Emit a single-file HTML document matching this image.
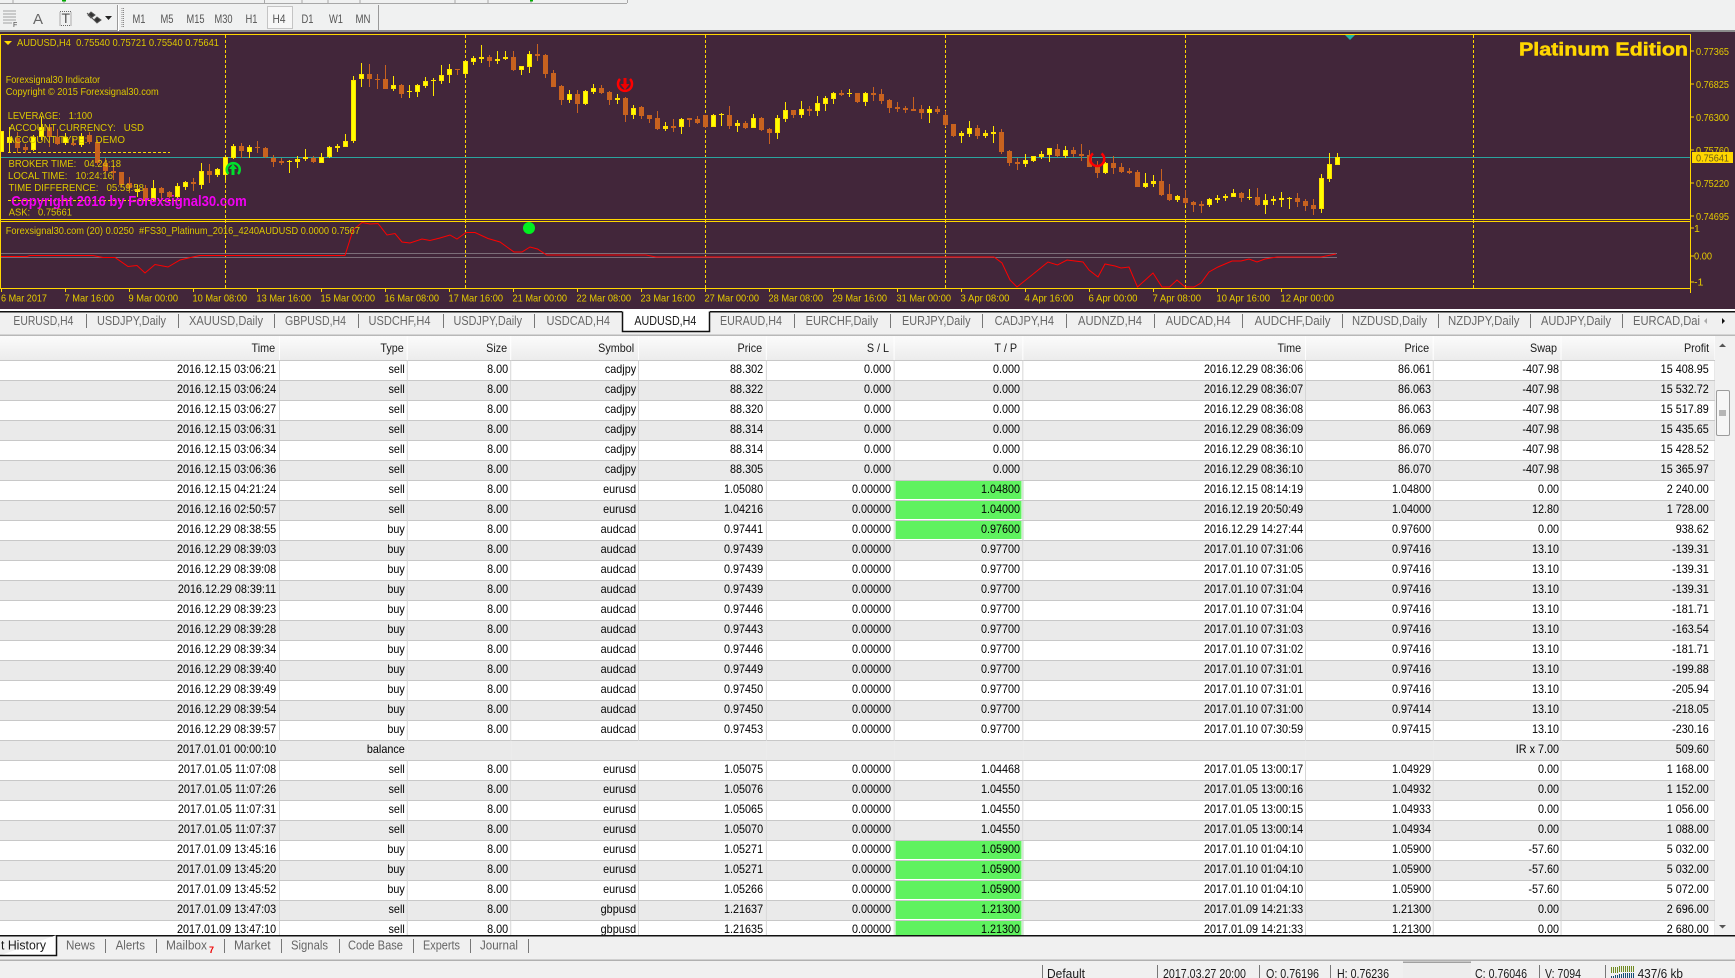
<!DOCTYPE html>
<html lang="en"><head><meta charset="utf-8"><title>MT4 Account History</title>
<style>
html,body{margin:0;padding:0;background:#f0f0f0}
#root{position:relative;width:1735px;height:978px;overflow:hidden;background:#f0f0f0;font-family:"Liberation Sans",sans-serif}
svg{position:absolute;left:0;top:0}
svg text{font-family:"Liberation Sans",sans-serif;white-space:pre}
.c{font-size:10.5px;fill:#dcc800}
.t{font-size:10.5px;fill:#e6cc00}
.s{font-size:12.5px;fill:#666}
.st{font-size:12.5px;fill:#1a1a1a}
.m{font-size:12px;fill:#555}
#tw{position:absolute;left:0;top:336px;width:1715px;height:599px;overflow:hidden;background:#fff}
table{border-collapse:separate;border-spacing:0;table-layout:fixed;width:1905.6px;transform:scaleX(.9);transform-origin:0 0;font:12px/17px "Liberation Sans",sans-serif;color:#000}
th{height:24px;padding:0 4.4px 0 0;box-sizing:border-box;text-align:right;font-weight:normal;color:#1a1a1a;background:linear-gradient(#fbfbfb,#ececec);border-right:1px solid #fff;overflow:hidden}
th:nth-child(2),th:nth-child(3){padding-right:3.3px}
th:nth-child(6),th:nth-child(7),th:last-child{padding-right:5.5px}
td{height:20px;padding:0 2.2px 0 0;box-sizing:border-box;text-align:right;vertical-align:top;white-space:nowrap;border-top:1px solid #c8c8c8;border-right:1px solid #d2d2d2;overflow:hidden}
td:first-child,td:nth-child(5),td:nth-child(6){padding-right:3.3px}
tr.a td{background:#eaeaea}
td.g,tr.a td.g{background:#5ff25f;box-shadow:inset 1px 0 0 #fff,inset -1px 0 0 #fff,inset 0 -1px 0 #fff}
td:last-child{padding-right:6px}
td.n{border-right-color:transparent}
</style></head><body><div id="root">
<svg width="1735" height="978" viewBox="0 0 1735 978">
<!-- toolbar -->
<rect width="1735" height="31" fill="#f0f1f1"/>
<path d="M0 3.5H627M627.5 0V3M13 0V3M64 0V3M264.5 0V3M302 0V3M328 0V3M360 0V3M455 0V3M488 0V3M531 0V3" stroke="#a8a8a8" fill="none"/>
<rect x="62" y="0" width="4" height="1.5" fill="#0a0"/><rect x="530" y="0" width="3" height="1.5" fill="#0a0"/>
<rect y="30" width="1735" height="2" fill="#8c8c8c"/>
<path d="M3.5 11H16M3.5 14H16M3.5 17H16M3.5 20H16M3.5 23H12" stroke="#555" stroke-dasharray="1 1" fill="none"/>
<text x="13" y="27" font-size="7" fill="#444">F</text>
<text x="33" y="24" font-size="15" fill="#666">A</text>
<path d="M60 11.5H71V25.5H60Z" fill="none" stroke="#666" stroke-dasharray="1 1"/>
<text x="61.5" y="23" font-size="14" fill="#555">T</text>
<path d="M91 12l4 3-4 3-3-3zM97 17l4 3-4 3-3-3zM87 13l8 8" fill="#333" stroke="#555"/>
<path d="M105 16h7l-3.5 4z" fill="#222"/>
<rect x="117" y="5" width="1" height="26" fill="#999"/><rect x="118" y="5" width="1" height="26" fill="#fff"/>
<path d="M122 8V27M123.500 8V27" stroke="#888" stroke-dasharray="1 1" fill="none"/>
<rect x="267.500" y="6.500" width="25" height="22" fill="#f7f7f7" stroke="#c4c4c4"/>
<rect x="378" y="5" width="1" height="26" fill="#999"/>
<g>
<text class="m" x="132.500" y="23" textLength="13" lengthAdjust="spacingAndGlyphs">M1</text><text class="m" x="160.500" y="23" textLength="13" lengthAdjust="spacingAndGlyphs">M5</text><text class="m" x="186.500" y="23" textLength="18" lengthAdjust="spacingAndGlyphs">M15</text><text class="m" x="214.500" y="23" textLength="18" lengthAdjust="spacingAndGlyphs">M30</text><text class="m" x="245.500" y="23" textLength="12" lengthAdjust="spacingAndGlyphs">H1</text><text class="m" x="272.500" y="23" textLength="13" lengthAdjust="spacingAndGlyphs">H4</text><text class="m" x="301.500" y="23" textLength="12" lengthAdjust="spacingAndGlyphs">D1</text><text class="m" x="329" y="23" textLength="14" lengthAdjust="spacingAndGlyphs">W1</text><text class="m" x="355.500" y="23" textLength="15" lengthAdjust="spacingAndGlyphs">MN</text>
</g>
<!-- chart -->
<rect y="32" width="1735" height="277" fill="#42263a"/>
<g fill="none" stroke="#ffd700" stroke-width="1" stroke-dasharray="3 2">
<path d="M225.500 35V288M465.500 35V288M705.500 35V288M945.500 35V288M1185.500 35V288M1473.500 35V288"/>
<path d="M8 152.500H170M8 200.500H180"/>
</g>
<path d="M0 157.500H1690" stroke="#2ba39e" fill="none"/>
<path d="M1 253.500H1337M1 257.500H1337" stroke="#7b6d78" fill="none"/>
<g shape-rendering="crispEdges" fill="none">
<path stroke="#ffe600" d="M1.500 131V152M9.500 127V152M33.500 135V151M41.500 117V140M65.500 133V145M81.500 133V147M137.500 185V197M153.500 180V202M177.500 183V198M185.500 181V190M201.500 163V189M217.500 168V177M225.500 155V180M233.500 144V159M249.500 145V158M289.500 160V173M297.500 156V168M305.500 149V161M321.500 153V163M329.500 146V158M337.500 144V152M345.500 134V147M353.500 76V143M361.500 63V87M393.500 76V91M409.500 85V98M417.500 84V97M425.500 77V88M433.500 78V96M441.500 65V84M449.500 64V83M465.500 60V78M473.500 56V65M481.500 45V63M497.500 51V64M505.500 51V60M521.500 66V75M529.500 51V73M569.500 90V103M585.500 90V105M593.500 84V94M617.500 94V104M633.500 105V119M665.500 122V131M681.500 118V134M713.500 114V127M721.500 113V126M737.500 120V132M753.500 114V128M777.500 115V139M785.500 102V122M801.500 101V118M817.500 96V116M825.500 96V111M833.500 92V104M849.500 89V97M865.500 92V106M929.500 106V123M961.500 131V143M969.500 121V137M985.500 130V138M993.500 126V143M1025.500 154V167M1033.500 156V162M1041.500 151V159M1049.500 148V162M1065.500 146V158M1105.500 162V174M1145.500 173V188M1153.500 175V187M1177.500 195V202M1209.500 198V207M1217.500 195V203M1225.500 194V201M1233.500 189V197M1249.500 189V200M1265.500 194V214M1273.500 196V205M1281.500 192V207M1289.500 197V209M1321.500 174V213M1329.500 153V182M1337.500 153V165"/>
<path stroke="#ffe000" stroke-width="5" d="M1.500 131V152M9.500 137V143M33.500 137V150M41.500 127V137M65.500 137V143M81.500 136V145M137.500 189V192M153.500 188V200M177.500 186V197M185.500 182V187M201.500 171V185M217.500 169V175M225.500 157V175M233.500 146V158M249.500 147V152M289.500 161V162M297.500 159V162M305.500 157V159M321.500 157V163M329.500 147V157M337.500 146V148M345.500 141V147M353.500 80V141M361.500 74V79M393.500 85V89M409.500 91V92M417.500 85V92M425.500 81V86M433.500 80V81M441.500 75V81M449.500 69V75M465.500 61V74M473.500 58V62M481.500 57V59M497.500 59V61M505.500 57V59M521.500 66V70M529.500 54V67M569.500 94V100M585.500 91V104M593.500 88V92M617.500 98V100M633.500 108V115M665.500 126V129M681.500 119V127M713.500 115V127M721.500 114V115M737.500 123V126M753.500 118V128M777.500 118V133M785.500 110V119M801.500 109V115M817.500 103V111M825.500 98V104M833.500 93V99M849.500 93V94M865.500 93V102M929.500 109V113M961.500 133V136M969.500 128V134M985.500 133V136M993.500 132V134M1025.500 160V164M1033.500 156V161M1041.500 154V157M1049.500 148V155M1065.500 150V156M1105.500 163V173M1145.500 183V187M1153.500 181V184M1177.500 196V200M1209.500 199V205M1217.500 198V200M1225.500 196V198M1233.500 193V197M1249.500 197V198M1265.500 200V205M1273.500 199V201M1281.500 198V200M1289.500 198V199M1321.500 178V209M1329.500 164V179M1337.500 157V165"/>
<path stroke="#ffff00" stroke-width="3" d="M1.500 132V151M9.500 138V142M33.500 138V149M41.500 128V136M65.500 138V142M81.500 137V144M153.500 189V199M177.500 187V196M185.500 183V186M201.500 172V184M217.500 170V174M225.500 158V174M233.500 147V157M249.500 148V151M321.500 158V162M329.500 148V156M345.500 142V146M353.500 81V140M361.500 75V78M393.500 86V88M417.500 86V91M425.500 82V85M441.500 76V80M449.500 70V74M465.500 62V73M473.500 59V61M521.500 67V69M529.500 55V66M569.500 95V99M585.500 92V103M593.500 89V91M633.500 109V114M681.500 120V126M713.500 116V126M753.500 119V127M777.500 119V132M785.500 111V118M801.500 110V114M817.500 104V110M825.500 99V103M833.500 94V98M865.500 94V101M929.500 110V112M969.500 129V133M1025.500 161V163M1033.500 157V160M1049.500 149V154M1065.500 151V155M1105.500 164V172M1145.500 184V186M1209.500 200V204M1233.500 194V196M1265.500 201V204M1321.500 179V208M1329.500 165V178M1337.500 158V164"/>
<path stroke="#c8621f" d="M17.500 132V153M25.500 144V153M49.500 125V147M57.500 129V145M73.500 138V146M89.500 132V144M97.500 140V165M105.500 158V173M113.500 165V180M121.500 172V187M129.500 177V193M145.500 185V202M161.500 187V200M169.500 191V198M193.500 178V191M209.500 164V183M241.500 143V158M257.500 141V153M265.500 147V158M273.500 155V167M281.500 158V165M313.500 156V163M369.500 64V87M377.500 74V89M385.500 65V89M401.500 84V98M457.500 69V75M489.500 55V67M513.500 51V71M537.500 44V61M545.500 54V78M553.500 70V87M561.500 85V105M577.500 90V113M601.500 85V94M609.500 91V105M625.500 97V122M641.500 106V119M649.500 115V123M657.500 111V130M673.500 119V132M689.500 118V127M697.500 116V124M705.500 115V128M729.500 106V129M745.500 121V129M761.500 117V131M769.500 128V144M793.500 110V118M809.500 106V116M841.500 90V96M857.500 93V103M873.500 87V101M881.500 89V104M889.500 99V113M897.500 102V112M905.500 106V113M913.500 97V111M921.500 105V119M937.500 106V114M945.500 111V127M953.500 124V137M977.500 125V139M1001.500 129V154M1009.500 150V166M1017.500 158V170M1057.500 144V157M1073.500 147V157M1081.500 144V161M1089.500 150V167M1097.500 161V178M1113.500 156V174M1121.500 163V173M1129.500 168V174M1137.500 170V187M1161.500 169V196M1169.500 184V201M1185.500 190V205M1193.500 201V212M1201.500 201V213M1241.500 192V202M1257.500 188V206M1297.500 193V207M1305.500 199V211M1313.500 199V215"/>
<path stroke="#c8621f" stroke-width="5" d="M17.500 138V148M25.500 147V150M49.500 127V137M57.500 137V144M73.500 143V145M89.500 135V142M97.500 142V163M105.500 163V171M113.500 171V173M121.500 172V185M129.500 183V188M145.500 188V200M161.500 188V193M169.500 192V197M193.500 182V184M209.500 171V175M241.500 146V151M257.500 147V148M265.500 148V157M273.500 158V162M281.500 161V163M313.500 158V162M369.500 74V79M377.500 79V80M385.500 79V89M401.500 85V94M457.500 69V70M489.500 57V61M513.500 57V70M537.500 54V56M545.500 55V74M553.500 73V87M561.500 86V100M577.500 94V104M601.500 88V93M609.500 92V100M625.500 98V115M641.500 107V116M649.500 115V119M657.500 118V129M673.500 126V128M689.500 118V120M697.500 119V123M705.500 115V127M729.500 115V126M745.500 123V128M761.500 118V130M769.500 129V133M793.500 110V115M809.500 109V111M841.500 93V95M857.500 93V102M873.500 93V95M881.500 94V101M889.500 100V108M897.500 107V109M905.500 108V110M913.500 109V111M921.500 109V113M937.500 109V112M945.500 115V125M953.500 124V136M977.500 128V136M1001.500 132V152M1009.500 151V163M1017.500 162V164M1057.500 149V156M1073.500 150V154M1081.500 154V156M1089.500 155V167M1097.500 166V173M1113.500 163V168M1121.500 167V172M1129.500 171V173M1137.500 172V187M1161.500 181V195M1169.500 194V200M1185.500 198V203M1193.500 202V205M1201.500 204V206M1241.500 193V198M1257.500 197V205M1297.500 198V202M1305.500 201V206M1313.500 205V209"/>
</g>
<!-- signal arrows -->
<path d="M228.500 174A6.500 6.500 0 1 1 238 174" fill="none" stroke="#00e02c" stroke-width="2.500"/>
<path d="M233 164l4 5h-2.500v6h-3v-6h-2.500z" fill="#00e02c"/>
<path d="M620 79A7 7 0 1 0 630 79" fill="none" stroke="#f00" stroke-width="2.500"/>
<path d="M623.500 78h3v6h3l-4.500 6-4.500-6h3z" fill="#e00"/>
<path d="M1093 153.500A7 7 0 1 0 1101.500 153.500" fill="none" stroke="#f00" stroke-width="2.500"/>
<circle cx="529" cy="228" r="6" fill="#00f020"/>
<path d="M1345 35h10l-5 5z" fill="#20b0a0"/>
<!-- indicator line -->
<path fill="none" stroke="#f00" d="M1 256.500H27L30 255.500H93L103 257.500H115L128 266.500L137 265.500L145 273L155 264.500L168 267L180 260L195 256.500L200 255.500H345L353 230L362 222.500L370 224L378 223.500L387 235L395 233.500L402 242L410 243L422 239L430 240.500L440 238L450 235L457 239L466 232.500L475 232.500L488 238.500L500 242L514 252L522 252L530 247L537.500 249L546.700 255H646L656 257H705L994 257L1002 263L1010 280L1017 287L1032 275L1048 262L1057.500 265L1067 260L1083 262L1089 270L1098 277L1105 264L1115 266L1121 268L1129 267L1137.500 287L1153 273L1162 287H1169.500L1177 280L1185 287H1194L1201 283L1209 272L1218 267L1232 261L1241 261L1249 259L1257 262L1265 259L1277 257H1321L1336 254"/>
<!-- frames -->
<path fill="none" stroke="#ffd700" d="M0.500 34.500H1690.500V288.500H0.500ZM0 219.500H1690.500M0 221.500H1690.500M1690.500 34V293"/>
<path stroke="#ffd700" fill="none" d="M1691 51H1694M1691 84H1694M1691 117H1694M1691 150H1694M1691 183H1694M1691 216H1694M1691 228H1694M1691 256H1694M1691 282H1694M1.500 289V292M65.500 289V292M129.500 289V292M193.500 289V292M257.500 289V292M321.500 289V292M385.500 289V292M449.500 289V292M513.500 289V292M577.500 289V292M641.500 289V292M705.500 289V292M769.500 289V292M833.500 289V292M897.500 289V292M961.500 289V292M1025.500 289V292M1089.500 289V292M1153.500 289V292M1217.500 289V292M1281.500 289V292"/>
<path d="M4 41h8l-4 4z" fill="#ffd700"/>
<!-- chart text -->
<text class="c" x="17" y="46" textLength="202" lengthAdjust="spacingAndGlyphs">AUDUSD,H4  0.75540 0.75721 0.75540 0.75641</text>
<text class="c" x="5.700" y="83" textLength="94.500" lengthAdjust="spacingAndGlyphs">Forexsignal30 Indicator</text>
<text class="c" x="5.700" y="95" textLength="153" lengthAdjust="spacingAndGlyphs">Copyright © 2015 Forexsignal30.com</text>
<text class="c" x="7.700" y="119" textLength="84.500" lengthAdjust="spacingAndGlyphs">LEVERAGE:   1:100</text>
<text class="c" x="9" y="131" textLength="135" lengthAdjust="spacingAndGlyphs">ACCOUNT CURRENCY:   USD</text>
<text class="c" x="8" y="143" textLength="117" lengthAdjust="spacingAndGlyphs">ACCOUNT TYPE:   DEMO</text>
<text class="c" x="8.500" y="167" textLength="112.500" lengthAdjust="spacingAndGlyphs">BROKER TIME:   04:24:18</text>
<text class="c" x="8" y="179" textLength="105" lengthAdjust="spacingAndGlyphs">LOCAL TIME:   10:24:16</text>
<text class="c" x="8.500" y="191" textLength="135.500" lengthAdjust="spacingAndGlyphs">TIME DIFFERENCE:   05:59:58</text>
<text class="c" x="8.700" y="215.500" textLength="63.300" lengthAdjust="spacingAndGlyphs">ASK:   0.75661</text>
<text x="11.300" y="206" font-size="15" font-weight="bold" fill="#f000f0" textLength="235.400" lengthAdjust="spacingAndGlyphs">Copyright 2016 by Forexsignal30.com</text>
<text class="c" x="5.700" y="234" textLength="354.300" lengthAdjust="spacingAndGlyphs">Forexsignal30.com (20) 0.0250  #FS30_Platinum_2016_4240AUDUSD 0.0000 0.7567</text>
<text x="1519" y="55.500" font-size="18.500" font-weight="bold" fill="#ffd700" stroke="#ffd700" stroke-width=".5" textLength="169" lengthAdjust="spacingAndGlyphs">Platinum Edition</text>
<!-- price axis -->
<g>
<text class="t" x="1696" y="55" textLength="33" lengthAdjust="spacingAndGlyphs">0.77365</text>
<text class="t" x="1696" y="88" textLength="33" lengthAdjust="spacingAndGlyphs">0.76825</text>
<text class="t" x="1696" y="121" textLength="33" lengthAdjust="spacingAndGlyphs">0.76300</text>
<text class="t" x="1696" y="154" textLength="33" lengthAdjust="spacingAndGlyphs">0.75760</text>
<text class="t" x="1696" y="187" textLength="33" lengthAdjust="spacingAndGlyphs">0.75220</text>
<text class="t" x="1696" y="220" textLength="33" lengthAdjust="spacingAndGlyphs">0.74695</text>
<rect x="1692" y="152" width="41" height="11" fill="#ffd700"/>
<text x="1696" y="161.500" font-size="10.500" fill="#6a5a1a" textLength="33" lengthAdjust="spacingAndGlyphs">0.75641</text>
<text class="t" x="1694" y="232">1</text>
<text class="t" x="1694" y="259.500" textLength="18" lengthAdjust="spacingAndGlyphs">0.00</text>
<text class="t" x="1694" y="285.500">-1</text>
</g>
<!-- time axis -->
<g>
<text class="t" x="1" y="301.500" textLength="46" lengthAdjust="spacingAndGlyphs">6 Mar 2017</text>
<text class="t" x="64.500" y="301.500" textLength="49.500" lengthAdjust="spacingAndGlyphs">7 Mar 16:00</text>
<text class="t" x="128.500" y="301.500" textLength="49.500" lengthAdjust="spacingAndGlyphs">9 Mar 00:00</text>
<text class="t" x="192.500" y="301.500" textLength="54.500" lengthAdjust="spacingAndGlyphs">10 Mar 08:00</text>
<text class="t" x="256.500" y="301.500" textLength="54.500" lengthAdjust="spacingAndGlyphs">13 Mar 16:00</text>
<text class="t" x="320.500" y="301.500" textLength="54.500" lengthAdjust="spacingAndGlyphs">15 Mar 00:00</text>
<text class="t" x="384.500" y="301.500" textLength="54.500" lengthAdjust="spacingAndGlyphs">16 Mar 08:00</text>
<text class="t" x="448.500" y="301.500" textLength="54.500" lengthAdjust="spacingAndGlyphs">17 Mar 16:00</text>
<text class="t" x="512.500" y="301.500" textLength="54.500" lengthAdjust="spacingAndGlyphs">21 Mar 00:00</text>
<text class="t" x="576.500" y="301.500" textLength="54.500" lengthAdjust="spacingAndGlyphs">22 Mar 08:00</text>
<text class="t" x="640.500" y="301.500" textLength="54.500" lengthAdjust="spacingAndGlyphs">23 Mar 16:00</text>
<text class="t" x="704.500" y="301.500" textLength="54.500" lengthAdjust="spacingAndGlyphs">27 Mar 00:00</text>
<text class="t" x="768.500" y="301.500" textLength="54.500" lengthAdjust="spacingAndGlyphs">28 Mar 08:00</text>
<text class="t" x="832.500" y="301.500" textLength="54.500" lengthAdjust="spacingAndGlyphs">29 Mar 16:00</text>
<text class="t" x="896.500" y="301.500" textLength="54.500" lengthAdjust="spacingAndGlyphs">31 Mar 00:00</text>
<text class="t" x="960.500" y="301.500" textLength="49" lengthAdjust="spacingAndGlyphs">3 Apr 08:00</text>
<text class="t" x="1024.500" y="301.500" textLength="49" lengthAdjust="spacingAndGlyphs">4 Apr 16:00</text>
<text class="t" x="1088.500" y="301.500" textLength="49" lengthAdjust="spacingAndGlyphs">6 Apr 00:00</text>
<text class="t" x="1152.500" y="301.500" textLength="48.500" lengthAdjust="spacingAndGlyphs">7 Apr 08:00</text>
<text class="t" x="1216.500" y="301.500" textLength="53.500" lengthAdjust="spacingAndGlyphs">10 Apr 16:00</text>
<text class="t" x="1280.500" y="301.500" textLength="53.500" lengthAdjust="spacingAndGlyphs">12 Apr 00:00</text>
</g>
<!-- chart tabs -->
<rect y="309" width="1735" height="27" fill="#f0f0f0"/>
<rect y="309" width="1735" height="2" fill="#fff"/>
<rect y="311" width="1735" height="1.500" fill="#111"/>
<rect y="334.500" width="1735" height="1.500" fill="#b8b8b8"/>
<rect x="622" y="310" width="88" height="2" fill="#fff"/>
<path d="M622.500 311.500V331.500H709.500V311.500" fill="#fff" stroke="#111" stroke-width="1.500"/>
<path stroke="#777" fill="none" d="M86.500 314V328M178.500 314V328M274.500 314V328M358.500 314V328M443.500 314V328M534.500 314V328M794.500 314V328M890.500 314V328M982.500 314V328M1066.500 314V328M1154.500 314V328M1242.500 314V328M1342.500 314V328M1438.500 314V328M1530.500 314V328M1622.500 314V328"/>
<text class="s" x="13.400" y="325" textLength="60" lengthAdjust="spacingAndGlyphs">EURUSD,H4</text>
<text class="s" x="97" y="325" textLength="69" lengthAdjust="spacingAndGlyphs">USDJPY,Daily</text>
<text class="s" x="189" y="325" textLength="74" lengthAdjust="spacingAndGlyphs">XAUUSD,Daily</text>
<text class="s" x="285" y="325" textLength="61" lengthAdjust="spacingAndGlyphs">GBPUSD,H4</text>
<text class="s" x="368.500" y="325" textLength="62" lengthAdjust="spacingAndGlyphs">USDCHF,H4</text>
<text class="s" x="453.500" y="325" textLength="68.500" lengthAdjust="spacingAndGlyphs">USDJPY,Daily</text>
<text class="s" x="546.500" y="325" textLength="63.500" lengthAdjust="spacingAndGlyphs">USDCAD,H4</text>
<text class="st" x="634.400" y="325" textLength="62" lengthAdjust="spacingAndGlyphs">AUDUSD,H4</text>
<text class="s" x="720" y="325" textLength="62" lengthAdjust="spacingAndGlyphs">EURAUD,H4</text>
<text class="s" x="805.600" y="325" textLength="72.400" lengthAdjust="spacingAndGlyphs">EURCHF,Daily</text>
<text class="s" x="902" y="325" textLength="68.500" lengthAdjust="spacingAndGlyphs">EURJPY,Daily</text>
<text class="s" x="994.600" y="325" textLength="59.400" lengthAdjust="spacingAndGlyphs">CADJPY,H4</text>
<text class="s" x="1078" y="325" textLength="64" lengthAdjust="spacingAndGlyphs">AUDNZD,H4</text>
<text class="s" x="1165.600" y="325" textLength="65" lengthAdjust="spacingAndGlyphs">AUDCAD,H4</text>
<text class="s" x="1254.600" y="325" textLength="76" lengthAdjust="spacingAndGlyphs">AUDCHF,Daily</text>
<text class="s" x="1352" y="325" textLength="75" lengthAdjust="spacingAndGlyphs">NZDUSD,Daily</text>
<text class="s" x="1448" y="325" textLength="71.500" lengthAdjust="spacingAndGlyphs">NZDJPY,Daily</text>
<text class="s" x="1541" y="325" textLength="70" lengthAdjust="spacingAndGlyphs">AUDJPY,Daily</text>
<text class="s" x="1633" y="325" textLength="67" lengthAdjust="spacingAndGlyphs">EURCAD,Dai</text>
<path d="M1707 318v6l-3-3z" fill="#aaa"/><path d="M1722 318v6l3-3z" fill="#111"/>
<!-- scrollbar -->
<rect x="1715" y="336" width="20" height="600" fill="#f1f1f1"/>
<path d="M1719 347h7l-3.500-3.500z" fill="#555"/>
<path d="M1719 925h7l-3.500 3.500z" fill="#555"/>
<rect x="1716.500" y="390.500" width="13" height="45" rx="1.500" fill="#f6f6f6" stroke="#9c9c9c"/>
<path d="M1719 411h7M1719 413h7M1719 415h7" stroke="#777" fill="none"/>
<!-- bottom tabs -->
<rect y="935" width="1735" height="1.500" fill="#111"/>
<rect y="959.500" width="1735" height="1.500" fill="#b0b0b0"/>
<path d="M0 955.500H56.500V935" fill="#fff" stroke="#111" stroke-width="1.500"/>
<text class="st" x="1" y="949.500" textLength="45" lengthAdjust="spacingAndGlyphs">t History</text>
<path stroke="#777" fill="none" d="M105.500 939V953M156.500 939V953M224.500 939V953M281.500 939V953M339.500 939V953M413.500 939V953M470.500 939V953M528.500 939V953"/>
<text class="s" x="66" y="949.500" textLength="29" lengthAdjust="spacingAndGlyphs">News</text>
<text class="s" x="115.600" y="949.500" textLength="29.400" lengthAdjust="spacingAndGlyphs">Alerts</text>
<text class="s" x="166" y="949.500" textLength="41" lengthAdjust="spacingAndGlyphs">Mailbox</text>
<text x="209" y="953" font-size="9" font-weight="bold" fill="#e00">7</text>
<text class="s" x="234" y="949.500" textLength="36.600" lengthAdjust="spacingAndGlyphs">Market</text>
<text class="s" x="291" y="949.500" textLength="37" lengthAdjust="spacingAndGlyphs">Signals</text>
<text class="s" x="348" y="949.500" textLength="55" lengthAdjust="spacingAndGlyphs">Code Base</text>
<text class="s" x="423" y="949.500" textLength="37" lengthAdjust="spacingAndGlyphs">Experts</text>
<text class="s" x="480" y="949.500" textLength="38" lengthAdjust="spacingAndGlyphs">Journal</text>
<!-- status bar -->
<rect x="1403" y="962" width="68" height="16" fill="#ededed"/>
<rect x="1403" y="961.500" width="68" height="1.500" fill="#a0a0a0"/>
<path stroke="#777" fill="none" d="M1042.500 965V978M1157.500 965V978M1259.500 965V978M1330.500 965V978M1539.500 965V978M1605.500 965V978"/>
<text class="st" x="1047" y="978" textLength="38" lengthAdjust="spacingAndGlyphs">Default</text>
<text class="st" x="1163" y="978" textLength="83" lengthAdjust="spacingAndGlyphs">2017.03.27 20:00</text>
<text class="st" x="1266" y="978" textLength="53" lengthAdjust="spacingAndGlyphs">O: 0.76196</text>
<text class="st" x="1337" y="978" textLength="52" lengthAdjust="spacingAndGlyphs">H: 0.76236</text>
<text class="st" x="1475" y="978" textLength="52" lengthAdjust="spacingAndGlyphs">C: 0.76046</text>
<text class="st" x="1545" y="978" textLength="36" lengthAdjust="spacingAndGlyphs">V: 7094</text>
<text class="st" x="1637.600" y="978" textLength="45.400" lengthAdjust="spacingAndGlyphs">437/6 kb</text>
<path stroke="#6f8a1f" fill="none" d="M1611.500 967V973M1613.500 967V973M1615.500 967V973M1617.500 967V973M1619.500 966V972M1621.500 966V972M1623.500 966V972M1625.500 966V972M1627.500 966V972M1629.500 966V972M1631.500 966V972M1633.500 966V972"/>
<path stroke="#154a72" fill="none" d="M1611.500 976V978M1613.500 976V978M1615.500 975V978M1617.500 975V978M1619.500 974V978M1621.500 974V978M1623.500 973V978M1625.500 973V978M1627.500 973V978M1629.500 973V978M1631.500 973V978M1633.500 973V978"/>
</svg>
<div id="tw"><table>
<colgroup><col style="width:311.1px"><col style="width:141.8px"><col style="width:114.9px"><col style="width:142.200px"><col style="width:142.200px"><col style="width:142.200px"><col style="width:142.200px"><col style="width:314.500px"><col style="width:142.200px"><col style="width:142.200px"><col style="width:170px"></colgroup>
<tr><th>Time<th>Type<th>Size<th>Symbol<th>Price<th>S / L<th>T / P<th>Time<th>Price<th>Swap<th>Profit</tr>
<tr><td>2016.12.15 03:06:21<td>sell<td>8.00<td>cadjpy<td>88.302<td>0.000<td>0.000<td>2016.12.29 08:36:06<td>86.061<td>-407.98<td>15 408.95</tr>
<tr class="a"><td>2016.12.15 03:06:24<td>sell<td>8.00<td>cadjpy<td>88.322<td>0.000<td>0.000<td>2016.12.29 08:36:07<td>86.063<td>-407.98<td>15 532.72</tr>
<tr><td>2016.12.15 03:06:27<td>sell<td>8.00<td>cadjpy<td>88.320<td>0.000<td>0.000<td>2016.12.29 08:36:08<td>86.063<td>-407.98<td>15 517.89</tr>
<tr class="a"><td>2016.12.15 03:06:31<td>sell<td>8.00<td>cadjpy<td>88.314<td>0.000<td>0.000<td>2016.12.29 08:36:09<td>86.069<td>-407.98<td>15 435.65</tr>
<tr><td>2016.12.15 03:06:34<td>sell<td>8.00<td>cadjpy<td>88.314<td>0.000<td>0.000<td>2016.12.29 08:36:10<td>86.070<td>-407.98<td>15 428.52</tr>
<tr class="a"><td>2016.12.15 03:06:36<td>sell<td>8.00<td>cadjpy<td>88.305<td>0.000<td>0.000<td>2016.12.29 08:36:10<td>86.070<td>-407.98<td>15 365.97</tr>
<tr><td>2016.12.15 04:21:24<td>sell<td>8.00<td>eurusd<td>1.05080<td>0.00000<td class="g">1.04800<td>2016.12.15 08:14:19<td>1.04800<td>0.00<td>2 240.00</tr>
<tr class="a"><td>2016.12.16 02:50:57<td>sell<td>8.00<td>eurusd<td>1.04216<td>0.00000<td class="g">1.04000<td>2016.12.19 20:50:49<td>1.04000<td>12.80<td>1 728.00</tr>
<tr><td>2016.12.29 08:38:55<td>buy<td>8.00<td>audcad<td>0.97441<td>0.00000<td class="g">0.97600<td>2016.12.29 14:27:44<td>0.97600<td>0.00<td>938.62</tr>
<tr class="a"><td>2016.12.29 08:39:03<td>buy<td>8.00<td>audcad<td>0.97439<td>0.00000<td>0.97700<td>2017.01.10 07:31:06<td>0.97416<td>13.10<td>-139.31</tr>
<tr><td>2016.12.29 08:39:08<td>buy<td>8.00<td>audcad<td>0.97439<td>0.00000<td>0.97700<td>2017.01.10 07:31:05<td>0.97416<td>13.10<td>-139.31</tr>
<tr class="a"><td>2016.12.29 08:39:11<td>buy<td>8.00<td>audcad<td>0.97439<td>0.00000<td>0.97700<td>2017.01.10 07:31:04<td>0.97416<td>13.10<td>-139.31</tr>
<tr><td>2016.12.29 08:39:23<td>buy<td>8.00<td>audcad<td>0.97446<td>0.00000<td>0.97700<td>2017.01.10 07:31:04<td>0.97416<td>13.10<td>-181.71</tr>
<tr class="a"><td>2016.12.29 08:39:28<td>buy<td>8.00<td>audcad<td>0.97443<td>0.00000<td>0.97700<td>2017.01.10 07:31:03<td>0.97416<td>13.10<td>-163.54</tr>
<tr><td>2016.12.29 08:39:34<td>buy<td>8.00<td>audcad<td>0.97446<td>0.00000<td>0.97700<td>2017.01.10 07:31:02<td>0.97416<td>13.10<td>-181.71</tr>
<tr class="a"><td>2016.12.29 08:39:40<td>buy<td>8.00<td>audcad<td>0.97449<td>0.00000<td>0.97700<td>2017.01.10 07:31:01<td>0.97416<td>13.10<td>-199.88</tr>
<tr><td>2016.12.29 08:39:49<td>buy<td>8.00<td>audcad<td>0.97450<td>0.00000<td>0.97700<td>2017.01.10 07:31:01<td>0.97416<td>13.10<td>-205.94</tr>
<tr class="a"><td>2016.12.29 08:39:54<td>buy<td>8.00<td>audcad<td>0.97450<td>0.00000<td>0.97700<td>2017.01.10 07:31:00<td>0.97414<td>13.10<td>-218.05</tr>
<tr><td>2016.12.29 08:39:57<td>buy<td>8.00<td>audcad<td>0.97453<td>0.00000<td>0.97700<td>2017.01.10 07:30:59<td>0.97415<td>13.10<td>-230.16</tr>
<tr class="a"><td class="n">2017.01.01 00:00:10<td class="n">balance<td class="n"><td class="n"><td class="n"><td class="n"><td class="n"><td class="n"><td class="n"><td class="n">IR x 7.00<td>509.60</tr>
<tr><td>2017.01.05 11:07:08<td>sell<td>8.00<td>eurusd<td>1.05075<td>0.00000<td>1.04468<td>2017.01.05 13:00:17<td>1.04929<td>0.00<td>1 168.00</tr>
<tr class="a"><td>2017.01.05 11:07:26<td>sell<td>8.00<td>eurusd<td>1.05076<td>0.00000<td>1.04550<td>2017.01.05 13:00:16<td>1.04932<td>0.00<td>1 152.00</tr>
<tr><td>2017.01.05 11:07:31<td>sell<td>8.00<td>eurusd<td>1.05065<td>0.00000<td>1.04550<td>2017.01.05 13:00:15<td>1.04933<td>0.00<td>1 056.00</tr>
<tr class="a"><td>2017.01.05 11:07:37<td>sell<td>8.00<td>eurusd<td>1.05070<td>0.00000<td>1.04550<td>2017.01.05 13:00:14<td>1.04934<td>0.00<td>1 088.00</tr>
<tr><td>2017.01.09 13:45:16<td>buy<td>8.00<td>eurusd<td>1.05271<td>0.00000<td class="g">1.05900<td>2017.01.10 01:04:10<td>1.05900<td>-57.60<td>5 032.00</tr>
<tr class="a"><td>2017.01.09 13:45:20<td>buy<td>8.00<td>eurusd<td>1.05271<td>0.00000<td class="g">1.05900<td>2017.01.10 01:04:10<td>1.05900<td>-57.60<td>5 032.00</tr>
<tr><td>2017.01.09 13:45:52<td>buy<td>8.00<td>eurusd<td>1.05266<td>0.00000<td class="g">1.05900<td>2017.01.10 01:04:10<td>1.05900<td>-57.60<td>5 072.00</tr>
<tr class="a"><td>2017.01.09 13:47:03<td>sell<td>8.00<td>gbpusd<td>1.21637<td>0.00000<td class="g">1.21300<td>2017.01.09 14:21:33<td>1.21300<td>0.00<td>2 696.00</tr>
<tr><td>2017.01.09 13:47:10<td>sell<td>8.00<td>gbpusd<td>1.21635<td>0.00000<td class="g">1.21300<td>2017.01.09 14:21:33<td>1.21300<td>0.00<td>2 680.00</tr>
</table></div>
</div></body></html>
